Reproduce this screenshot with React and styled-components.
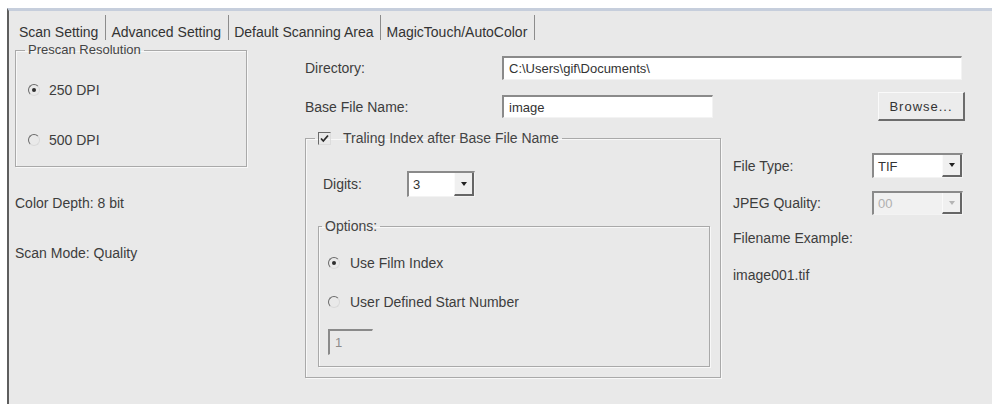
import React from 'react';
import styled, { createGlobalStyle } from 'styled-components';

const GlobalStyle = createGlobalStyle`
  html, body {
    margin: 0;
    padding: 0;
    background: #ffffff;
  }
  body {
    font-family: "Liberation Sans", Arial, sans-serif;
    font-size: 14px;
    color: #3d3d3d;
  }
`;

const Window = styled.div`
  margin: 8px 0 0 7px;
  height: 396px;
  box-sizing: border-box;
  border-top: 3px solid #c6cedc;
  border-left: 2px solid #5e5e5e;
  background: #e9e9e9;
  overflow: hidden;
`;

const TabBar = styled.div`
  display: flex;
  padding: 4px 0 0 5px;
`;

const Tab = styled.div`
  display: flex;
  align-items: flex-end;
  height: 25px;
  padding: 0 7px 0 5px;
  border-right: 1px solid #8c8c8c;
  line-height: 16px;
  font-size: 14px;
  color: #333;
  white-space: nowrap;
`;

const Body = styled.div`
  display: flex;
  padding: 3px 0 0 6px;
`;

const LeftCol = styled.div`
  width: 232px;
  display: flex;
  flex-direction: column;
`;

const Group = styled.fieldset`
  margin: 0;
  box-sizing: border-box;
  width: ${p => p.$w}px;
  height: ${p => p.$h}px;
  padding: 0 0 0 ${p => p.$pl || 0}px;
  border: 1px solid #a9a9a9;
  box-shadow: inset 1px 1px 0 #f8f8f8, 1px 1px 0 #f8f8f8;
  min-width: 0;
`;

const Legend = styled.legend`
  display: flex;
  align-items: center;
  gap: 12px;
  padding: 0 3px;
  margin-left: ${p => p.$ml || 0}px;
  line-height: 14px;
  font-size: ${p => p.$fs || 13}px;
  color: #444;
`;

const RadioList = styled.div`
  display: flex;
  flex-direction: column;
  gap: ${p => p.$gap}px;
  padding-top: ${p => p.$pt}px;
`;

const RadioRow = styled.label`
  display: flex;
  align-items: center;
  gap: ${p => p.$gap || 10}px;
  line-height: 16px;
  font-size: 14px;
`;

const Radio = styled.span`
  position: relative;
  width: 10px;
  height: 10px;
  border-radius: 50%;
  border: 1px solid;
  border-color: #6a6a6a #dadada #dadada #6a6a6a;
  flex: none;
  &::after {
    content: '';
    position: absolute;
    left: 3px;
    top: 3px;
    width: 4px;
    height: 4px;
    border-radius: 50%;
    background: ${p => (p.$checked ? '#2e2e2e' : 'transparent')};
  }
`;

const Info = styled.div`
  line-height: 16px;
  margin-top: ${p => p.$mt}px;
`;

const MainCol = styled.div`
  margin-left: 58px;
  padding-top: 13px;
  width: 660px;
  display: flex;
  flex-direction: column;
`;

const FieldRow = styled.div`
  display: flex;
  align-items: center;
  margin-top: ${p => p.$mt || 0}px;
`;

const Label = styled.div`
  width: ${p => p.$w}px;
  flex: none;
  line-height: 16px;
`;

const TextInput = styled.div`
  box-sizing: border-box;
  width: ${p => p.$w}px;
  height: ${p => p.$h || 24}px;
  padding: 0 5px;
  display: flex;
  align-items: center;
  background: ${p => (p.$disabled ? '#e9e9e9' : '#ffffff')};
  color: ${p => (p.$disabled ? '#8d8d8d' : '#333')};
  border-top: 2px solid #8a8a8a;
  border-left: 2px solid #8a8a8a;
  border-right: 1px solid ${p => (p.$disabled ? '#e9e9e9' : '#f3f3f3')};
  border-bottom: 1px solid ${p => (p.$disabled ? '#e9e9e9' : '#f3f3f3')};
  font-size: 13px;
`;

const StartNumber = styled(TextInput)`
  margin-top: 19px;
`;

const Button = styled.div`
  box-sizing: border-box;
  margin-left: auto;
  width: 87px;
  height: 29px;
  display: flex;
  align-items: center;
  justify-content: center;
  background: #ececec;
  border-top: 1px solid #fafafa;
  border-left: 1px solid #fafafa;
  border-right: 2px solid #6c6c6c;
  border-bottom: 2px solid #6c6c6c;
  letter-spacing: 1px;
  font-size: 13px;
  color: #333;
`;

const Lower = styled.div`
  display: flex;
  margin-top: 10px;
`;

const IndexBody = styled.div`
  display: flex;
  flex-direction: column;
`;

const Select = styled.div`
  box-sizing: border-box;
  width: ${p => p.$w}px;
  height: ${p => p.$h || 25}px;
  display: flex;
  align-items: stretch;
  background: ${p => (p.$disabled ? '#f1f1f1' : '#ffffff')};
  border-top: 2px solid #8a8a8a;
  border-left: 2px solid #8a8a8a;
  border-right: 1px solid #f3f3f3;
  border-bottom: 1px solid #f3f3f3;
`;

const SelectValue = styled.div`
  flex: 1;
  display: flex;
  align-items: center;
  padding-left: 4px;
  font-size: 13px;
  color: ${p => (p.$disabled ? '#b0b0b0' : '#333')};
`;

const SelectArrow = styled.div`
  width: 17px;
  display: flex;
  align-items: center;
  justify-content: center;
  background: #f0f0f0;
  border-left: 1px solid #fafafa;
  border-right: 2px solid #666;
  border-bottom: 2px solid #666;
  &::after {
    content: '';
    border-left: 3px solid transparent;
    border-right: 3px solid transparent;
    border-top: 4px solid ${p => (p.$disabled ? '#b5b5b5' : '#222')};
  }
`;

const Check = styled.span`
  width: 11px;
  height: 11px;
  display: inline-flex;
  flex: none;
  border-top: 1px solid #6a6a6a;
  border-left: 1px solid #6a6a6a;
  border-right: 1px solid #dcdcdc;
  border-bottom: 1px solid #dcdcdc;
`;

const OptionsGroup = styled(Group)`
  margin: 22px 0 0 -5px;
`;

const RightCol = styled.div`
  margin-left: 12px;
  padding-top: 22px;
  display: flex;
  flex-direction: column;
`;

const DropSelect = ({ value, w, h, disabled }) => (
  <Select $w={w} $h={h} $disabled={disabled}>
    <SelectValue $disabled={disabled}>{value}</SelectValue>
    <SelectArrow $disabled={disabled} />
  </Select>
);

export default function App() {
  return (
    <>
      <GlobalStyle />
      <Window>
        <TabBar>
          <Tab>Scan Setting</Tab>
          <Tab>Advanced Setting</Tab>
          <Tab>Default Scanning Area</Tab>
          <Tab>MagicTouch/AutoColor</Tab>
        </TabBar>
        <Body>
          <LeftCol>
            <Group $w={232} $h={124} $pl={12}>
              <Legend $ml={-3}>Prescan Resolution</Legend>
              <RadioList $pt={25} $gap={34}>
                <RadioRow $gap={9}>
                  <Radio $checked />
                  250 DPI
                </RadioRow>
                <RadioRow $gap={9}>
                  <Radio />
                  500 DPI
                </RadioRow>
              </RadioList>
            </Group>
            <Info $mt={28}>Color Depth: 8 bit</Info>
            <Info $mt={34}>Scan Mode: Quality</Info>
          </LeftCol>

          <MainCol>
            <FieldRow>
              <Label $w={197}>Directory:</Label>
              <TextInput $w={460}>C:\Users\gif\Documents\</TextInput>
            </FieldRow>
            <FieldRow $mt={12}>
              <Label $w={197}>Base File Name:</Label>
              <TextInput $w={211} $h={23}>image</TextInput>
              <Button>Browse...</Button>
            </FieldRow>

            <Lower>
              <Group $w={416} $h={247} $pl={17}>
                <Legend $ml={-8} $fs={14}>
                  <Check>
                    <svg width="11" height="11" viewBox="0 0 11 11">
                      <path d="M2 5.5 L4.3 8 L9 2.5" fill="none" stroke="#2b2b2b" strokeWidth="1.8" />
                    </svg>
                  </Check>
                  Traling Index after Base File Name
                </Legend>
                <IndexBody>
                  <FieldRow $mt={26}>
                    <Label $w={84}>Digits:</Label>
                    <DropSelect value="3" w={68} h={26} />
                  </FieldRow>
                  <OptionsGroup $w={392} $h={148} $pl={9}>
                    <Legend $ml={-6} $fs={14}>Options:</Legend>
                    <RadioList $pt={22} $gap={23}>
                      <RadioRow>
                        <Radio $checked />
                        Use Film Index
                      </RadioRow>
                      <RadioRow>
                        <Radio />
                        User Defined Start Number
                      </RadioRow>
                    </RadioList>
                    <StartNumber $w={45} $h={26} $disabled>1</StartNumber>
                  </OptionsGroup>
                </IndexBody>
              </Group>

              <RightCol>
                <FieldRow>
                  <Label $w={139}>File Type:</Label>
                  <DropSelect value="TIF" w={91} />
                </FieldRow>
                <FieldRow $mt={13}>
                  <Label $w={139}>JPEG Quality:</Label>
                  <DropSelect value="00" w={91} h={24} disabled />
                </FieldRow>
                <Info $mt={15}>Filename Example:</Info>
                <Info $mt={21}>image001.tif</Info>
              </RightCol>
            </Lower>
          </MainCol>
        </Body>
      </Window>
    </>
  );
}
